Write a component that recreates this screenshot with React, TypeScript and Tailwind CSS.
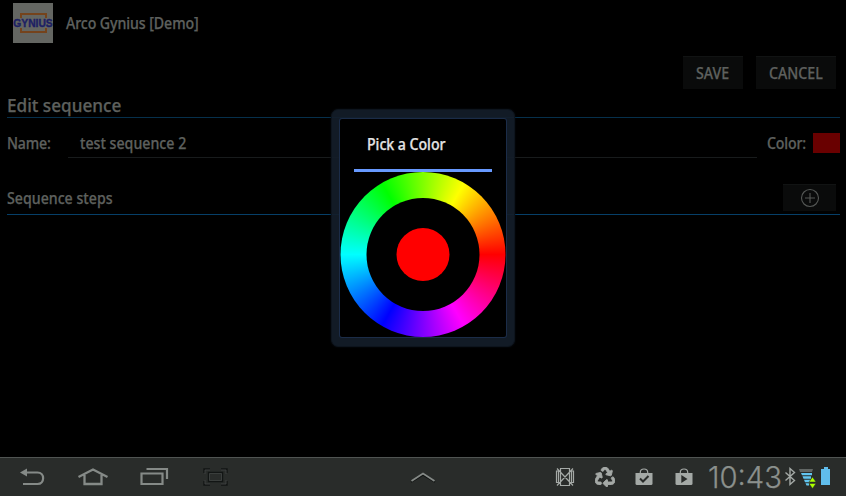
import React from "react";
import { FaRecycle } from "react-icons/fa";

function Logo() {
  return (
    <svg width="40" height="40" viewBox="0 0 40 40" className="block overflow-visible bg-[#646662]">
      <path d="M8 15V11H33V15M8 25V29H33V25" fill="none" stroke="#75431c" strokeWidth="2" />
      <text x="0.3" y="24.2" textLength="39.4" lengthAdjust="spacingAndGlyphs" fontFamily="Liberation Sans" fontWeight="700" fontSize="11" fill="#1c2064" stroke="#1c2064" strokeWidth="0.4">GYNIUS</text>
    </svg>
  );
}

function Condensed({ className = "", children }: { className?: string; children: React.ReactNode }) {
  return <span className={`inline-block origin-left scale-x-[0.915] whitespace-nowrap [-webkit-text-stroke:0.25px_currentColor] ${className}`}>{children}</span>;
}

function DarkButton({ className, children }: { className: string; children: React.ReactNode }) {
  return (
    <button className={`flex items-center border-t border-[#111313] bg-[#0a0b0b] text-[#5e605e] ${className}`}>
      {children}
    </button>
  );
}

function ColorDialog() {
  return (
    <section className="absolute left-[331px] top-[109px] h-[238px] w-[184px] rounded-[7px] border border-[#0d141d] bg-[#141e2ae8] px-2 pb-[9px] pt-[9px] shadow-[0_0_2px_#0b1017]">
      <div className="flex h-[218px] w-[166px] flex-col items-center rounded-[2px] bg-black shadow-[0_0_0_1px_#1b2c48]">
        <h2 className="flex h-[50px] w-[138px] shrink-0 items-center pl-[13px] pt-[2px] text-[15.5px] font-medium text-[#e4e4e4]">
          <Condensed className="tracking-[-0.05px]">Pick a Color</Condensed>
        </h2>
        <div className="h-[3px] w-[138px] shrink-0 bg-[#6799ff]" />
        <div className="flex size-[165px] shrink-0 -translate-x-[0.5px] items-center justify-center rounded-full bg-[conic-gradient(from_90deg,#f00,#f0f,#00f,#0ff,#0f0,#ff0,#f00)]">
          <div className="flex size-[113px] items-center justify-center rounded-full bg-black">
            <div className="size-[53px] rounded-full bg-[#f00]" />
          </div>
        </div>
      </div>
    </section>
  );
}

function NavButtons() {
  return (
    <svg width="240" height="38" viewBox="0 458 240 38" className="block" fill="none" stroke="#858a87">
      <path d="M25 472.5H37.5C45 472.5 45 484 37.5 484H23" strokeWidth="2.2" />
      <path d="M20 472.5L27 468.5V476.5Z" fill="#858a87" stroke="none" />
      <path d="M78.5 477L93 469.5L107.5 477M84.5 475V484H101.5V475" strokeWidth="2.3" />
      <path d="M141.5 473.5H162.5V484H141.5ZM146.5 469H167V479" strokeWidth="2.2" />
      <g stroke="#121514" strokeWidth="1.4">
        <path d="M204 473V469H210M221 469H227V473M204 481V485H210M221 485H227V481M208.5 472.5H222.5V481.5H208.5Z" />
      </g>
      <g stroke="#454947" strokeWidth="0.7">
        <path d="M205 474V470H210M221 470H226V474M205 480V484H210M221 484H226V480M209.5 473.5H221.5V480.5H209.5Z" />
      </g>
    </svg>
  );
}

function Bag({ children }: { children: React.ReactNode }) {
  return (
    <svg width="18" height="18" viewBox="0 0 18 18" className="block">
      <path d="M5.3 5.5V4.2A3.7 3.2 0 0 1 12.7 4.2V5.5" fill="none" stroke="#a4a9a6" strokeWidth="1.2" />
      <path d="M.5 5H17.5V15.5Q17.5 17 16 17H2Q.5 17 .5 15.5Z" fill="#a4a9a6" />
      {children}
    </svg>
  );
}

function StatusIcons() {
  return (
    <div className="flex items-center">
      <svg width="20" height="20" viewBox="0 0 20 20" className="mr-[20px] block" fill="none" stroke="#a4a9a6" strokeWidth="1.2">
        <path d="M5.5 1.5H14.5V18.5H5.5ZM5.5 4H1.5V15.5H5.5M14.5 4H18.5V15.5H14.5M3.5 4V15.5M16.5 4V15.5M2 1.5L18 18.5M18 1.5L2 18.5" />
      </svg>
      <FaRecycle className="mr-[20px] size-5 text-[#a4a9a6]" stroke="#a4a9a6" strokeWidth="24" />
      <Bag><path d="M5 10.5L8 13.5L13.5 8" fill="none" stroke="#292c2a" strokeWidth="2" /></Bag>
      <div className="w-[22px]" />
      <Bag><path d="M6.3 7V15L12.5 11Z" fill="#292c2a" /></Bag>
    </div>
  );
}

function SystemStatus() {
  return (
    <svg width="140" height="38" viewBox="706 458 140 38" className="block">
      <text x="708" y="487.5" textLength="74" lengthAdjust="spacingAndGlyphs" fontFamily="Inter, Roboto, sans-serif" fontWeight="300" fontSize="29.5" fill="#8b908d" stroke="#8b908d" strokeWidth="0.25">10:43</text>
      <path d="M785.5 472.5L794.5 480.5L790 484.5V468.5L794.5 472.5L785.5 480.5" fill="none" stroke="#a4a9a6" strokeWidth="1.4" />
      <path d="M799 469H813L812 472H800Z" fill="#626765" />
      <path d="M801 473H812V475.3H802ZM802.5 476.3H811V478.8H803.5ZM804 479.8H810V482.2H805ZM805.5 483.2H809V485.5H806.5Z" fill="#62c5f0" />
      <path d="M812.5 477L816 482H809ZM809 483.5H816L812.5 488.5Z" fill="#aaff00" stroke="#292c2a" strokeWidth="0.5" />
      <path d="M824 467H828V469H830V485H821V469H824Z" fill="#60bdec" />
    </svg>
  );
}

export default function App() {
  return (
    <div className="relative flex h-[496px] w-[846px] flex-col overflow-hidden bg-black font-['Noto_Sans','Open_Sans',sans-serif] text-[15.5px] leading-none text-[#5e605e]">
      <main className="flex h-[457px] shrink-0 flex-col font-medium">
        <header className="flex h-[56px] items-start pl-[13px] pt-[3px]">
          <Logo />
          <h1 className="ml-[13px] flex h-[42px] items-center tracking-[-0.1px]"><Condensed>Arco Gynius [Demo]</Condensed></h1>
        </header>
        <div className="flex h-[33px] justify-end gap-[13px] pr-[10px]">
          <DarkButton className="h-[33px] w-[60px] pl-[13px] pt-[2px]"><Condensed>SAVE</Condensed></DarkButton>
          <DarkButton className="h-[33px] w-[80px] pl-[13px] pt-[2px]"><Condensed>CANCEL</Condensed></DarkButton>
        </div>
        <h2 className="ml-[7px] mr-[6px] flex h-[29px] items-end border-b border-[#06304c] pb-[2px] text-[18.75px]"><Condensed>Edit sequence</Condensed></h2>
        <div className="ml-[7px] mr-[6px] flex h-[40px] items-start">
          <label className="mt-[18px] w-[61px]"><Condensed className="tracking-[-0.2px]">Name:</Condensed></label>
          <div className="flex h-[40px] w-[689px] items-start border-b border-[#181b1c] pl-[12px] pt-[18px]"><Condensed>test sequence 2</Condensed></div>
          <span className="ml-[10px] mt-[18px] w-[46px]"><Condensed className="tracking-[-0.2px]">Color:</Condensed></span>
          <div className="mt-[15px] h-[20px] w-[27px] bg-[#690000]" />
        </div>
        <div className="ml-[7px] mr-[6px] mt-[26px] flex h-[31px] items-start justify-between border-b border-[#063f68] pr-[4px]">
          <h3 className="mt-[7px]"><Condensed>Sequence steps</Condensed></h3>
          <DarkButton className="h-[27px] w-[53px] justify-center">
            <svg width="20" height="20" viewBox="0 0 20 20" fill="none" stroke="#555856" strokeWidth="1.1"><circle cx="10" cy="10" r="8.5" /><path d="M5 10H15M10 5V15" /></svg>
          </DarkButton>
        </div>
      </main>
      <nav className="flex h-[39px] shrink-0 items-center border-t border-[#505452] bg-[#292c2a]">
        <NavButtons />
        <svg width="26" height="12" viewBox="0 0 26 12" className="ml-[170px] block" fill="none"><path d="M1 11L13 4L25 11" stroke="#111413" strokeWidth="1.5" /><path d="M1.5 10L13 2.5L24.5 10" stroke="#858a87" strokeWidth="1.8" /></svg>
        <div className="ml-[119px] w-[151px]"><StatusIcons /></div>
        <SystemStatus />
      </nav>
      <ColorDialog />
    </div>
  );
}
